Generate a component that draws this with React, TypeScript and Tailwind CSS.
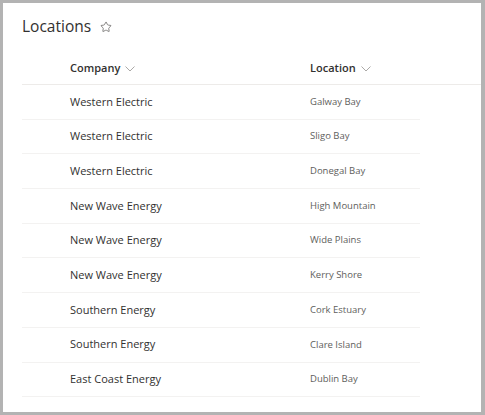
import { Star } from "lucide-react";

const rows = [
  { company: "Western Electric", location: "Galway Bay" },
  { company: "Western Electric", location: "Sligo Bay" },
  { company: "Western Electric", location: "Donegal Bay" },
  { company: "New Wave Energy", location: "High Mountain" },
  { company: "New Wave Energy", location: "Wide Plains" },
  { company: "New Wave Energy", location: "Kerry Shore" },
  { company: "Southern Energy", location: "Cork Estuary" },
  { company: "Southern Energy", location: "Clare Island" },
  { company: "East Coast Energy", location: "Dublin Bay" },
];

function Chevron() {
  return (
    <svg width="10" height="6" viewBox="0 0 10 6" className="mt-[1px] text-[#a19f9d]">
      <polyline points="0.5,0.5 5,5 9.5,0.5" fill="none" stroke="currentColor" strokeWidth="0.9" />
    </svg>
  );
}

export default function App() {
  return (
    <div className="h-[415px] w-[485px] border-[3px] border-r-4 border-[#b3b3b3] bg-white font-['Open_Sans',sans-serif] text-[#323130]">
      {/* Title */}
      <div className="flex h-[47px] items-center gap-[9px] pl-[19px]">
        <h1 className="text-[15.5px] leading-none">Locations</h1>
        <Star className="h-[12px] w-[12px] text-[#605e5c]" strokeWidth={1.5} />
      </div>

      {/* Header */}
      <div className="ml-[19px] flex h-[35px] items-center border-b border-[#edebe9] pt-[3px] text-[11px] font-semibold">
        <div className="flex w-[288px] items-center gap-[5px] pl-[48px]">
          Company
          <Chevron />
        </div>
        <div className="flex items-center gap-[5px]">
          Location
          <Chevron />
        </div>
      </div>

      {/* Rows */}
      <div className="ml-[19px] w-[398px]">
        {rows.map((r, i) => (
          <div key={i} className="flex h-[34.7px] items-center border-b border-[#f3f2f1]">
            <div className="w-[288px] pl-[48px] text-[11px]">{r.company}</div>
            <div className="text-[9.5px] text-[#605e5c]">{r.location}</div>
          </div>
        ))}
      </div>
    </div>
  );
}
